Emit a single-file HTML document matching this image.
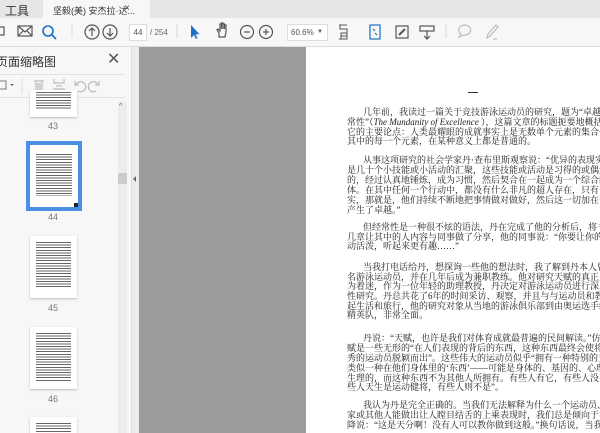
<!DOCTYPE html>
<html><head><meta charset="utf-8"><style>
*{margin:0;padding:0;box-sizing:border-box}
body{width:600px;height:433px;overflow:hidden;position:relative;background:#fff;font-family:"Liberation Sans","Noto Sans CJK SC",sans-serif;}
.abs{position:absolute}
#tabs{left:0;top:0;width:600px;height:18px;background:#e6e6e6}
#tb{left:0;top:18px;width:600px;height:29px;background:#f7f7f7;border-bottom:1px solid #ddd}
#panel{left:0;top:47px;width:131px;height:386px;background:#f7f7f7}
#strip{left:131px;top:47px;width:8px;height:386px;background:#ececec;border-left:1px solid #ddd}
#gray{left:139px;top:47px;width:167px;height:386px;background:#9b9b9b}
#page{left:306px;top:47px;width:294px;height:386px;background:#fff;overflow:hidden}
.t{position:absolute;font-family:"Liberation Serif","Noto Serif CJK SC",serif;font-size:9px;line-height:10px;white-space:nowrap;color:#222;left:41px}
.t.i{left:57px}
.thumb{position:absolute;background:#fff;box-shadow:0 1px 2px #bbb;overflow:hidden}
.lines{position:absolute;left:6px;right:6px;background:repeating-linear-gradient(#666 0 1px,#fff 1px 2.6px)}
.num{position:absolute;font-size:9px;color:#777;width:60px;text-align:center}
</style></head><body>
<div class="abs" id="tabs"></div>
<div class="abs" style="left:5px;top:2px;font-size:12px;color:#333">工具</div>
<div class="abs" style="left:43px;top:0;width:107px;height:18px;background:#f7f7f7"></div>
<div class="abs" style="left:53px;top:4px;font-size:9px;color:#333">坚毅(美) 安杰拉·达...</div>
<div class="abs" style="left:124px;top:3px;font-size:10px;color:#333">×</div>
<div class="abs" id="tb"></div>
<svg class="abs" style="left:0;top:18px" width="600" height="29" viewBox="0 18 600 29">
<g fill="none" stroke="#555" stroke-width="1.2">
<rect x="-4" y="27" width="8" height="8"/>
<rect x="18" y="26" width="14" height="10"/><path d="M18 26l7 6 7-6M18 36l5-5M32 36l-5-5"/>
<circle cx="48" cy="31" r="5" stroke="#1e6fc2" stroke-width="1.6"/><path d="M52 35l4 4" stroke="#1e6fc2" stroke-width="1.8"/>
<path d="M72 24v14" stroke="#ddd"/>
<circle cx="92" cy="32" r="7"/><path d="M92 36v-8M89 31l3-3 3 3"/>
<circle cx="110" cy="32" r="7"/><path d="M110 28v8M107 33l3 3 3-3"/>
<path d="M177 24v14" stroke="#ddd"/>
<path d="M219 37v-4l-2-3 1-1 2 2v-7h1.5v5v-6h1.5v6v-5h1.5v5v-4h1.5v7l-1 5z"/>
<circle cx="247" cy="32" r="6.5"/><path d="M244 32h6"/>
<circle cx="266" cy="32" r="6.5"/><path d="M263 32h6M266 29v6"/>
<path d="M339 25h8M339 39h8M340 25v4h7v4M341 36h6" stroke-width="1"/><rect x="341" y="33" width="6" height="6" stroke-width="1"/>
<rect x="370" y="25" width="10" height="14" stroke="#1e6fc2"/><path d="M373 29l2 2M377 35l-2-2" stroke="#1e6fc2"/>
<rect x="396" y="26" width="12" height="12"/><path d="M399 35l6-6" stroke-width="2"/>
<rect x="420" y="26" width="14" height="5"/><path d="M427 31v8M424 36l3 3 3-3"/>
<path d="M446 24v14" stroke="#ddd"/>
<path d="M459 37l2-3a6 5 0 1 1 3 1z" stroke="#bbb"/>
<path d="M487 38l1-4 8-9 2 2-8 9zM497 39h-4" stroke="#bbb"/>
</g>
<path d="M191 25v13l3-3 2 4 1.5-.7-2-4h4z" fill="#1e6fc2"/>
</svg>
<div class="abs" style="left:129px;top:24px;width:18px;height:17px;background:#fff;border:1px solid #ddd;font-size:8px;color:#555;text-align:center;line-height:15px">44</div>
<div class="abs" style="left:150px;top:28px;font-size:8px;color:#666">/ 254</div>
<div class="abs" style="left:287px;top:24px;width:41px;height:17px;background:#fff;border:1px solid #ddd;font-size:8px;color:#555;line-height:15px;padding-left:3px">60.6%<span style="position:absolute;right:4px;font-size:6px">▼</span></div>

<div class="abs" id="panel"></div>
<div class="abs" style="left:-4px;top:53px;font-size:12px;color:#333">页面缩略图</div>
<div class="abs" style="left:107px;top:49px;font-size:16px;color:#555">✕</div>
<div class="abs" style="left:0;top:74px;width:125px;height:24px;border-top:1px solid #e2e2e2;border-bottom:1px solid #e2e2e2"></div>
<svg class="abs" style="left:0;top:74px" width="125" height="24">
<g fill="none" stroke="#777" stroke-width="1"><rect x="-3" y="7" width="9" height="8"/><path d="M22 4v16" stroke="#ddd"/></g>
<path d="M10 10l2 2 2-2z" fill="#666"/>
<g fill="none" stroke="#bbb" stroke-width="1.2">
<path d="M34 7h10M36 7v11h6V7M38 9v7M40 9v7"/>
<path d="M54 5v4h10V5M54 19v-4h10v4M56 12h6"/>
<path d="M78 17a5 5 0 1 0-2-6M75 7v4h4"/>
<path d="M96 17a5 5 0 1 1 2-6M99 7v4h-4"/>
</g></svg>
<div class="thumb" style="left:30px;top:90px;width:47px;height:27px"><div class="lines" style="top:2px;height:18px"></div></div>
<div class="num" style="left:23px;top:121px">43</div>
<div class="abs" style="left:26px;top:141px;width:56px;height:70px;background:#4a90e2"></div>
<div class="thumb" style="left:30px;top:145px;width:48px;height:62px;box-shadow:none"><div class="lines" style="top:9px;height:42px"></div><div style="position:absolute;right:0;bottom:0;width:4px;height:4px;background:#222"></div></div>
<div class="num" style="left:23px;top:212px">44</div>
<div class="thumb" style="left:30px;top:236px;width:47px;height:62px"><div class="lines" style="top:6px;height:46px"></div></div>
<div class="num" style="left:23px;top:303px">45</div>
<div class="thumb" style="left:30px;top:327px;width:47px;height:62px"><div class="lines" style="top:6px;height:48px"></div></div>
<div class="num" style="left:23px;top:394px">46</div>
<div class="thumb" style="left:30px;top:417px;width:47px;height:16px"><div class="lines" style="top:6px;height:10px"></div></div>
<div class="abs" style="left:118px;top:102px;width:9px;height:331px;background:#ececec"></div>
<div class="abs" style="left:119px;top:103px;font-size:7px;color:#666">^</div>
<div class="abs" style="left:118px;top:173px;width:9px;height:11px;background:#ccc"></div>
<div class="abs" id="strip"></div>
<div class="abs" style="left:133px;top:176px;width:0;height:0;border-top:3px solid transparent;border-bottom:3px solid transparent;border-right:3px solid #666"></div>
<div class="abs" id="gray"></div>
<div class="abs" id="page">
<div class="abs" style="left:162px;top:45px;width:10px;height:1px;background:#333"></div>
<div class="t i" style="top:60px">几年前，我读过一篇关于竞技游泳运动员的研究，题为“卓越的平</div>
<div class="t" style="top:70px">常性”（<i>The Mundanity of Excellence</i> ），这篇文章的标题扼要地概括</div>
<div class="t" style="top:80px">它的主要论点：人类最耀眼的成就事实上是无数单个元素的集合体，</div>
<div class="t" style="top:89px">其中的每一个元素，在某种意义上都是普通的。</div>
<div class="t i" style="top:108px">从事这项研究的社会学家丹·查布里斯观察说：“优异的表现实际上</div>
<div class="t" style="top:118px">是几十个小技能或小活动的汇聚，这些技能或活动是习得的或偶然悟</div>
<div class="t" style="top:128px">的，经过认真地锤炼，成为习惯，然后契合在一起成为一个综合的整</div>
<div class="t" style="top:138px">体。在其中任何一个行动中，都没有什么非凡的超人存在，只有一个事</div>
<div class="t" style="top:148px">实，那就是，他们持续不断地把事情做对做好，然后这一切加在一起</div>
<div class="t" style="top:158px">产生了卓越。”</div>
<div class="t i" style="top:175px">但经常性是一种很不炫的语法，丹在完成了他的分析后，将书中的</div>
<div class="t" style="top:185px">几章让其中的人内容与同事做了分享，他的同事说：“你要让你的书生</div>
<div class="t" style="top:194px">动活泼，听起来更有趣……”</div>
<div class="t i" style="top:215px">当我打电话给丹，想探询一些他的想法时，我了解到丹本人曾是一</div>
<div class="t" style="top:225px">名游泳运动员，并在几年后成为兼职教练。他对研究天赋的真正主意</div>
<div class="t" style="top:234px">为着迷，作为一位年轻的助理教授，丹决定对游泳运动员进行深入的</div>
<div class="t" style="top:244px">性研究。丹总共花了6年的时间采访、观察，并且与与运动员和教练一</div>
<div class="t" style="top:254px">起生活和旅行，他的研究对象从当地的游泳俱乐部到由奥运选手组成</div>
<div class="t" style="top:263px">精英队，非常全面。</div>
<div class="t i" style="top:286px">丹说：“天赋，也许是我们对体育成就最普遍的民间解读。”仿佛天</div>
<div class="t" style="top:296px">赋是一些无形的“在人们表现的背后的东西，这种东西最终会使将最优</div>
<div class="t" style="top:306px">秀的运动员脱颖而出”。这些伟大的运动员似乎“拥有一种特别的天分，</div>
<div class="t" style="top:316px">类似一种在他们身体里的‘东西’——可能是身体的、基因的、心理的或</div>
<div class="t" style="top:326px">生理的，而这种东西不为其他人所拥有。有些人有它，有些人没有；有</div>
<div class="t" style="top:335px">些人天生是运动健将，有些人则不是”。</div>
<div class="t i" style="top:353px">我认为丹是完全正确的。当我们无法解释为什么一个运动员、音乐</div>
<div class="t" style="top:363px">家或其他人能做出让人瞠目结舌的上乘表现时，我们总是倾向于举手投</div>
<div class="t" style="top:373px">降说：“这是天分啊！没有人可以教你做到这般。”换句话说，当我们看</div>
</div>
</body></html>
